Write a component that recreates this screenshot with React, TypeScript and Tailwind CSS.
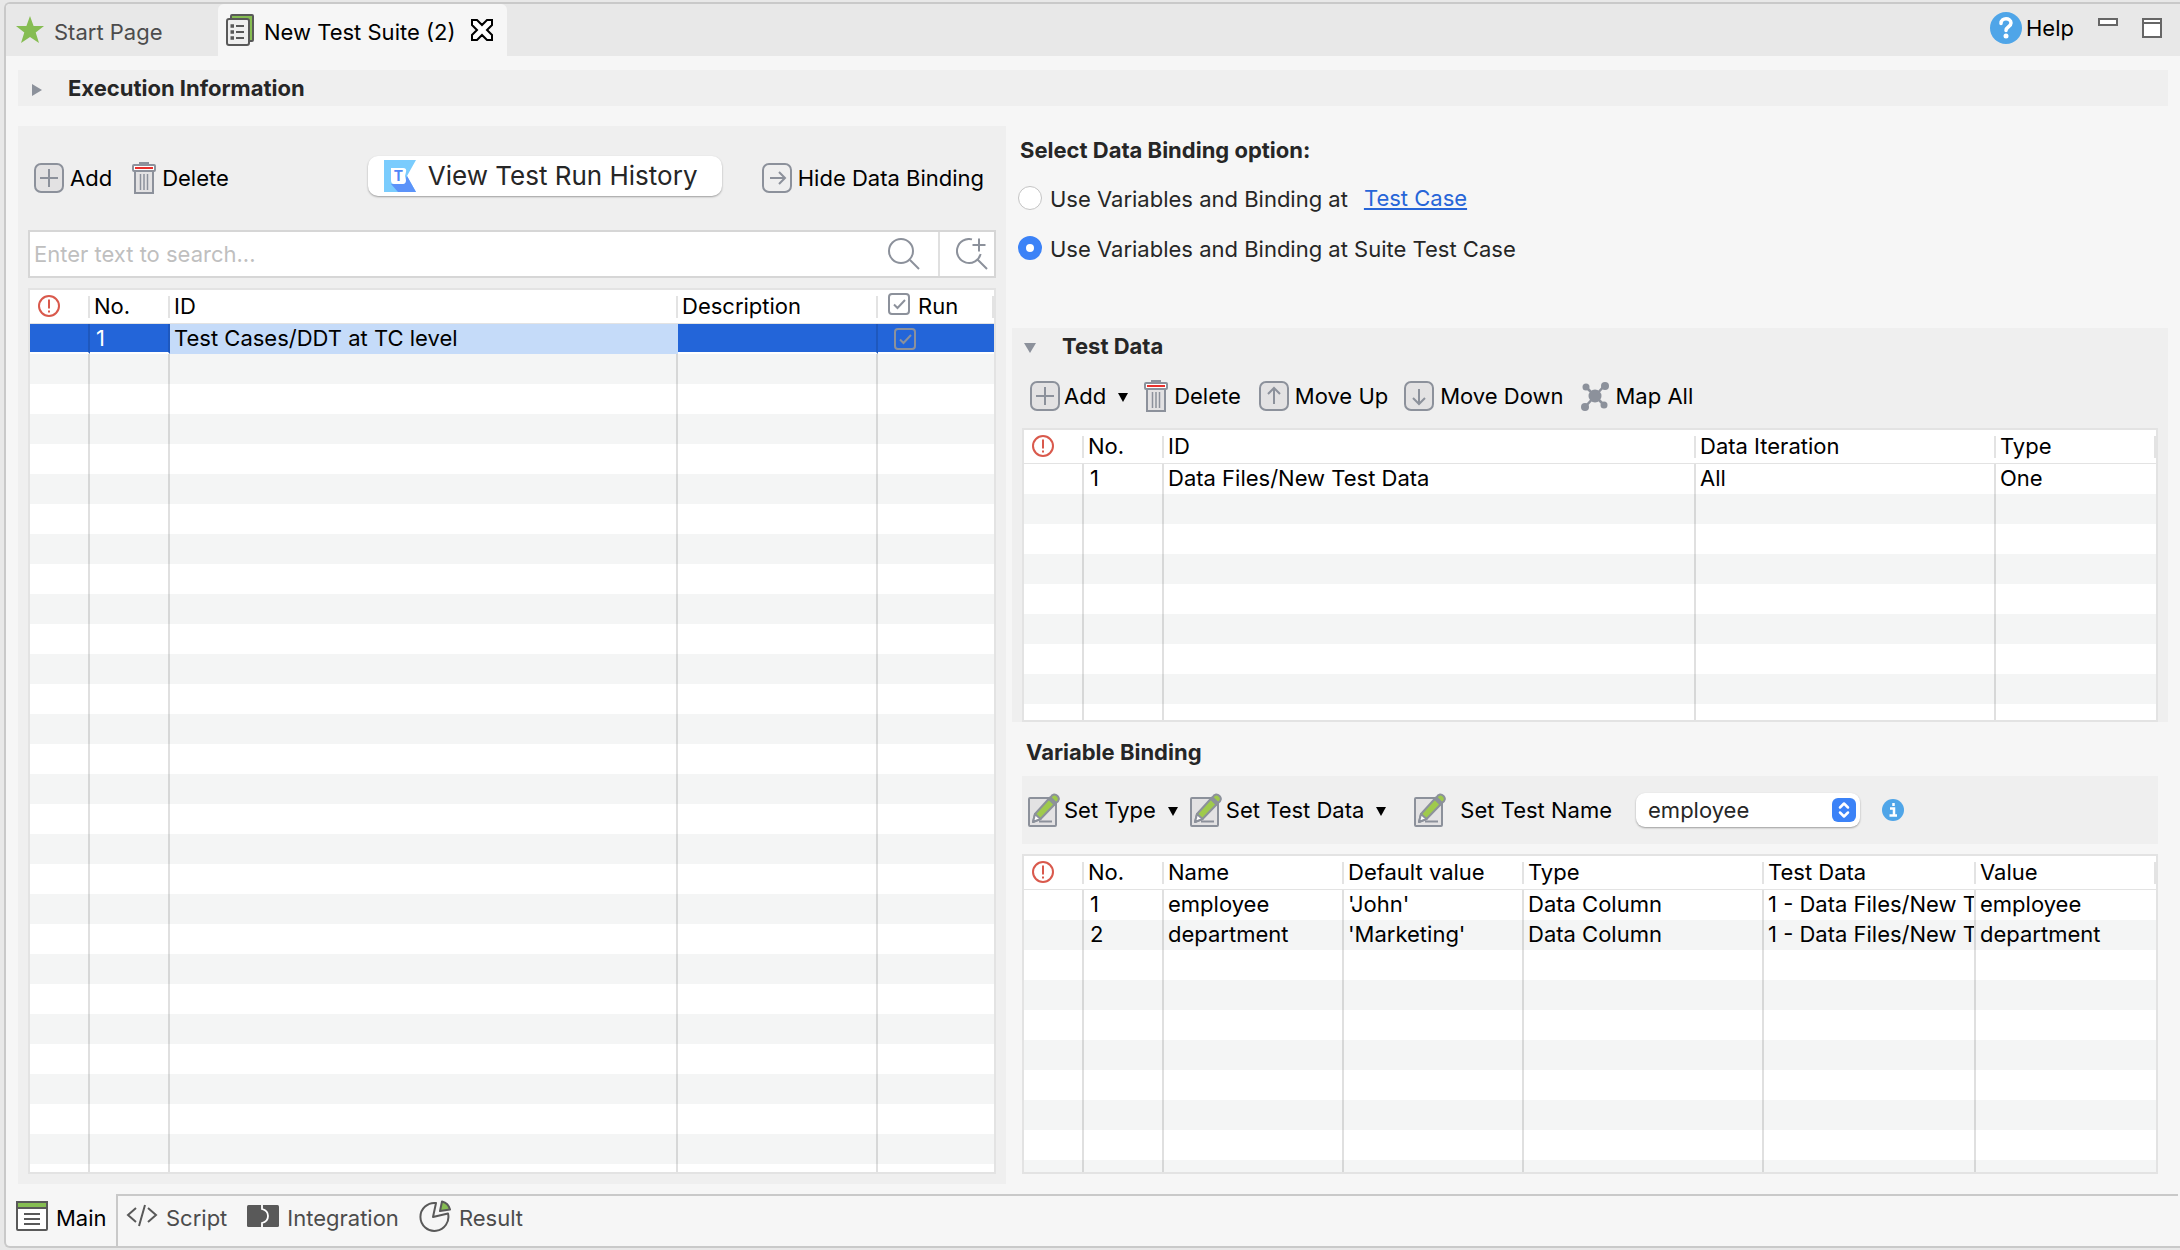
import React from "react";

type Cell = React.ReactNode;
type Column = { label: Cell; width?: string };

function WarningIcon() {
  return (
    <svg width="22" height="22" viewBox="0 0 22 22" fill="none" stroke="#d9594c" strokeWidth="2" role="img" aria-label="Status">
      <circle cx="11" cy="11" r="10" />
      <path d="M11 4.500v9M11 15.500v2" />
    </svg>
  );
}

function BoxIcon({ d, plain }: { d: string; plain?: boolean }) {
  return (
    <svg width="30" height="30" viewBox="0 0 30 30" fill="none" stroke="#8c919b" strokeWidth="2" className="shrink-0">
      <rect x="1" y="1" width="28" height="28" rx="6" fill={plain ? "none" : "#e3e2e3"} />
      <path d={d} />
    </svg>
  );
}

const PLUS = "M6 15h18M15 6v18";
const RIGHT = "M8 15h15M17 9l6 6-6 6";
const UP = "M15 23V7M9 13l6-6 6 6";
const DOWN = "M15 8v15M9 17l6 6 6-6";

function TrashIcon() {
  return (
    <svg width="24" height="32" viewBox="0 0 24 32" fill="none" stroke="#8c919b" strokeWidth="2" className="shrink-0">
      <path d="M3 9v22h18V9" fill="#e3e2e3" />
      <path d="M7 1.500h10" strokeWidth="3" />
      <rect x="1" y="3" width="22" height="6" rx="1" fill="#fff" />
      <path d="M3 6h18" stroke="#e8302c" />
      <path d="M8.500 12v16M12 12v16M15.500 12v16" strokeWidth="1.500" />
    </svg>
  );
}

function EditIcon() {
  return (
    <svg width="32" height="34" viewBox="0 0 32 34" fill="none" stroke="#8c919b" strokeWidth="2" strokeLinejoin="round" className="shrink-0">
      <rect x="1" y="5" width="27" height="28" rx="1" fill="#e3e2e3" />
      <path d="M11 28.500h13" />
      <path d="M5 29l2-8L22 4.500l6 5.500L12.500 26z" fill="#9fca4c" />
      <path d="M22.500 4.500c2-4 5-3.500 7-1.500s2 4.500-1.500 7z" fill="#9fca4c" />
      <path d="M5 29l2-8 5.500 5z" fill="#fff" />
      <path d="M21 6l6 6" />
    </svg>
  );
}

function MapIcon() {
  return (
    <svg width="30" height="30" viewBox="0 0 30 30" fill="#8c919b" stroke="#8c919b" strokeWidth="2.500" className="shrink-0">
      <path d="M6 6l18 18M25 4L5 26" />
      <g stroke="none">
        <circle cx="15" cy="15" r="6.500" />
        <circle cx="6" cy="6" r="3.500" />
        <circle cx="25" cy="5" r="4" />
        <circle cx="24" cy="24" r="3.500" />
        <circle cx="5" cy="26" r="4" />
      </g>
    </svg>
  );
}

function Caret() {
  return (
    <svg width="10" height="9" viewBox="0 0 10 9" className="shrink-0">
      <path d="M0 0h10L5 9z" fill="#000" />
    </svg>
  );
}

function ToolButton({ icon, label, caret, wide }: { icon: Cell; label: string; caret?: boolean; wide?: boolean }) {
  return (
    <button type="button" className={"flex items-center whitespace-nowrap " + (wide ? "gap-3.5" : caret ? "gap-1" : "gap-1.5")}>
      {icon}
      <span>{label}</span>
      {caret && <span className="pt-0.5 pl-2"><Caret /></span>}
    </button>
  );
}

function RunCheck({ label }: { label: string }) {
  return (
    <span className="relative block size-[22px] shrink-0">
      <input type="checkbox" defaultChecked aria-label={label} className="peer block size-[22px] appearance-none rounded-sm border-2 border-[#8c919b]" />
      <svg viewBox="0 0 22 22" className="pointer-events-none absolute inset-0 hidden peer-checked:block" fill="none" stroke="#8c919b" strokeWidth="2">
        <path d="M6 11.500l3.500 3.500L17 7" />
      </svg>
    </span>
  );
}

function StripedTable({ label, columns, rows, selected }: { label: string; columns: Column[]; rows: Cell[][]; selected?: boolean }) {
  const filler = Array.from({ length: 40 }, (_, i) => i + rows.length);
  return (
    <div className="min-h-0 flex-1 overflow-hidden border-2 border-[#e3e3e3] bg-white">
      <table aria-label={label} className="w-full table-fixed border-separate border-spacing-0 text-left">
        <colgroup>
          {columns.map((c, i) => (
            <col key={i} className={c.width} />
          ))}
        </colgroup>
        <thead>
          <tr>
            {columns.map((c, i) => (
              <th key={i} scope="col" className="h-[34px] border-b border-[#e3e3e3] p-0 font-normal">
                <div className="flex h-[22px] items-center border-r-2 border-[#e3e3e3] pb-0.5 pl-1 whitespace-nowrap">{c.label}</div>
              </th>
            ))}
          </tr>
        </thead>
        <tbody>
          {rows.map((r, i) => (
            <tr key={i} className={i % 2 ? "bg-[#f4f5f5]" : "bg-white"}>
              {r.map((cell, j) => (
                <td
                  key={j}
                  className={
                    "h-[30px] overflow-hidden p-0 whitespace-nowrap " +
                    (j < r.length - 1 ? "border-r-2 " : "") +
                    (j === 1 ? "pl-1.5 " : "pl-1 ") +
                    (selected
                      ? j === 2
                        ? "border-[#c5dbf9] bg-[#c5dbf9] pb-0.5"
                        : "border-r-black/12 border-b-2 border-b-white bg-[#2365d9] text-white"
                      : "border-black/12 pb-0.5")
                  }
                >
                  {cell}
                </td>
              ))}
            </tr>
          ))}
          {filler.map((n) => (
            <tr key={n} aria-hidden="true" className={n % 2 ? "bg-[#f4f5f5]" : "bg-white"}>
              {columns.map((_, j) => (
                <td key={j} className={"h-[30px] p-0 " + (j < columns.length - 1 ? "border-r-2 border-black/12" : "")} />
              ))}
            </tr>
          ))}
        </tbody>
      </table>
    </div>
  );
}

const warn = <span className="pl-1"><WarningIcon /></span>;

function EditorTabs() {
  return (
    <header className="flex h-13 shrink-0 items-stretch bg-[#e8e8e8]">
      <button type="button" className="flex w-[212px] items-center pl-2.5 text-[#4c4c4c]">
        <svg width="28" height="28" viewBox="0 0 28 28">
          <path d="M14 0l3.600 10H28l-8.300 6.600L23 27l-9-6-9 6 3.300-10.400L0 10h10.400z" fill="#86bd52" />
        </svg>
        <span className="pt-1 pl-2.5">Start Page</span>
      </button>
      <div className="flex items-center rounded-t-md bg-[#f6f6f6] pr-3.5 pl-2">
        <button type="button" className="flex items-center">
          <svg width="28" height="32" viewBox="0 0 28 32" fill="none" stroke="#595959" strokeWidth="2">
            <rect x="5" y="1" width="22" height="26" rx="1" fill="#86bd52" />
            <rect x="1" y="5" width="22" height="26" rx="2" fill="#efefef" />
            <path d="M10 12h8M10 18h8M10 24h8" />
            <path d="M4.500 12h3.500M4.500 18h3.500M4.500 24h3.500" strokeWidth="3.500" />
          </svg>
          <span className="pt-1 pl-2.5">New Test Suite (2)</span>
        </button>
        <button type="button" aria-label="Close tab" className="pl-4">
          <svg width="22" height="22" viewBox="0 0 22 22" fill="#fff" stroke="#000" strokeWidth="2">
            <path d="M1 1h5l5 5 5-5h5v5l-5 5 5 5v5h-5l-5-5-5 5H1v-5l5-5-5-5z" />
          </svg>
        </button>
      </div>
      <div className="mb-1 ml-auto flex items-center pr-4.5">
        <button type="button" className="flex items-center gap-1">
          <svg width="32" height="32" viewBox="0 0 32 32" fill="none">
            <circle cx="16" cy="16" r="16" fill="#4fa5e8" />
            <path d="M11 11.500c0-6.500 10-6 10-.5 0 4-5 3.500-5 7.500" stroke="#fff" strokeWidth="3.500" strokeLinecap="round" />
            <circle cx="16" cy="24" r="2.500" fill="#fff" />
          </svg>
          <span>Help</span>
        </button>
        <button type="button" aria-label="Minimize" className="mb-3 pl-6">
          <svg width="20" height="8" viewBox="0 0 20 8" fill="#fff" stroke="#666" strokeWidth="2">
            <rect x="1" y="1" width="18" height="6" />
          </svg>
        </button>
        <button type="button" aria-label="Maximize" className="pl-6">
          <svg width="20" height="20" viewBox="0 0 20 20" fill="#fff" stroke="#666" strokeWidth="2">
            <path d="M1 1h18v18H1zM1 5h18" />
          </svg>
        </button>
      </div>
    </header>
  );
}

function TestCasePanel() {
  return (
    <section className="flex min-h-0 flex-col bg-[#efefef] px-2.5 pb-2.5">
      <div className="flex h-[104px] shrink-0 items-center pr-3 pl-1.5">
        <ToolButton icon={<BoxIcon d={PLUS} />} label="Add" />
        <div className="pl-5">
          <ToolButton icon={<TrashIcon />} label="Delete" />
        </div>
        <button type="button" className="mb-1 ml-auto flex h-10 w-[354px] items-center gap-3 rounded-[10px] bg-white pl-4 text-[26px] whitespace-nowrap text-[#262626] shadow-[0_1px_2px_rgba(0,0,0,0.35)]">
          <svg width="32" height="32" viewBox="0 0 32 32">
            <path d="M0 0h32L23 16l9 16H0z" fill="#7accfd" />
            <path d="M7 24h12l4-8 9 16H14z" fill="#5c93f9" />
            <path d="M7 8h12q4 0 3 4l-1 4 1 4q0 4-3 4h-9q-3 0-3-4z" fill="#fff" />
            <text x="14.500" y="21" textAnchor="middle" fontSize="14" fontWeight="700" fill="#4f86f7">T</text>
          </svg>
          View Test Run History
        </button>
        <div className="pl-10">
          <ToolButton icon={<BoxIcon d={RIGHT} plain />} label="Hide Data Binding" />
        </div>
      </div>
      <div className="mb-2.5 flex h-12 shrink-0 items-stretch border-2 border-[#d6d6d6] bg-white">
        <input type="search" aria-label="Search test cases" placeholder="Enter text to search..." className="min-w-0 flex-1 bg-transparent pl-1 outline-none placeholder:text-[#bfbfbf]" />
        <button type="button" aria-label="Search" className="pr-4.5 pl-4">
          <svg width="32" height="32" viewBox="0 0 32 32" fill="none" stroke="#8c919b" strokeWidth="2">
            <circle cx="13" cy="13" r="12" />
            <path d="M22 22l9 9" />
          </svg>
        </button>
        <button type="button" aria-label="Advanced search" className="border-l-2 border-[#e0e0e0] pr-1.5 pl-4">
          <svg width="32" height="32" viewBox="0 0 32 32" fill="none" stroke="#8c919b" strokeWidth="2">
            <path d="M16 1.400A12 12 0 1 0 24.600 16M22 22l9 9M23 .5v13M16.500 7h13" />
          </svg>
        </button>
      </div>
      <StripedTable
        label="Test cases"
        selected
        columns={[
          { label: warn, width: "w-[60px]" },
          { label: "No.", width: "w-[80px]" },
          { label: "ID" },
          { label: "Description", width: "w-[200px]" },
          { label: <span className="flex items-center gap-2 pl-1.5"><span className="pb-1"><RunCheck label="Run all" /></span>Run</span>, width: "w-[116px]" },
        ]}
        rows={[["", "1", <span className="text-black">Test Cases/DDT at TC level</span>, "", <span className="block pt-0.5 pl-3"><RunCheck label="Run Test Cases/DDT at TC level" /></span>]]}
      />
    </section>
  );
}

function RadioRow({ id, label, checked, children }: { id: string; label: string; checked?: boolean; children?: Cell }) {
  return (
    <div className="flex h-[50px] items-center pl-1.5">
      <input
        type="radio"
        name="binding"
        id={id}
        defaultChecked={checked}
        className="size-6 appearance-none rounded-full border border-[#c4c4c4] bg-white checked:border-8 checked:border-[#3b82f7]"
      />
      <label htmlFor={id} className="pt-0.5 pl-2">{label}</label>
      {children}
    </div>
  );
}

function BindingPanel() {
  return (
    <div className="grid min-h-0 grid-rows-[auto_minmax(0,394fr)_minmax(0,452fr)] pb-2.5">
      <fieldset className="mb-[55px] text-[#262626]">
        <legend className="flex h-[47px] items-center pl-2 font-bold">Select Data Binding option:</legend>
        <RadioRow id="bind-case" label="Use Variables and Binding at">
          <a href="#test-case" className="pl-4 text-[#2765d8] underline underline-offset-2">Test Case</a>
        </RadioRow>
        <RadioRow id="bind-suite" label="Use Variables and Binding at Suite Test Case" checked />
      </fieldset>

      <section className="flex min-h-0 flex-col bg-[#efefef] px-2.5">
        <button type="button" className="flex h-9 shrink-0 items-center pl-0.5 font-bold text-[#262626]">
          <svg width="12" height="10" viewBox="0 0 12 10" className="mt-1"><path d="M0 0h12L6 10z" fill="#8c919b" /></svg>
          <span className="pl-6.5">Test Data</span>
        </button>
        <div className="flex h-16 shrink-0 items-center gap-4 pl-2">
          <ToolButton icon={<BoxIcon d={PLUS} />} label="Add" caret />
          <div className="pr-0.5"><ToolButton icon={<TrashIcon />} label="Delete" /></div>
          <ToolButton icon={<BoxIcon d={UP} />} label="Move Up" />
          <ToolButton icon={<BoxIcon d={DOWN} />} label="Move Down" />
          <ToolButton icon={<MapIcon />} label="Map All" />
        </div>
        <StripedTable
          label="Test data"
          columns={[
            { label: warn, width: "w-[60px]" },
            { label: "No.", width: "w-[80px]" },
            { label: "ID" },
            { label: "Data Iteration", width: "w-[300px]" },
            { label: "Type", width: "w-[160px]" },
          ]}
          rows={[["", "1", "Data Files/New Test Data", "All", "One"]]}
        />
      </section>

      <section className="flex min-h-0 flex-col px-2.5">
        <h2 className="flex h-[54px] shrink-0 items-center pt-1.5 pl-1 font-bold text-[#262626]">Variable Binding</h2>
        <div className="mb-2.5 flex h-[68px] shrink-0 items-center bg-[#efefef] pl-1.5">
          <ToolButton icon={<EditIcon />} label="Set Type" caret />
          <div className="pl-3"><ToolButton icon={<EditIcon />} label="Set Test Data" caret /></div>
          <div className="pl-7"><ToolButton icon={<EditIcon />} label="Set Test Name" wide /></div>
          <div className="relative ml-6">
            <select aria-label="Test name variable" className="block h-[34px] w-[224px] appearance-none rounded-[9px] bg-white pl-3 text-[#262626] shadow-[0_1px_2px_rgba(0,0,0,0.35)]">
              <option>employee</option>
              <option>department</option>
            </select>
            <svg width="24" height="24" viewBox="0 0 24 24" className="pointer-events-none absolute top-[5px] right-1" fill="none" stroke="#fff" strokeWidth="2.500" strokeLinecap="round" strokeLinejoin="round">
              <rect width="24" height="24" rx="6" fill="#3b82f7" stroke="none" />
              <path d="M8 9.500L12 5.500l4 4M8 14.500l4 4 4-4" />
            </svg>
          </div>
          <svg width="22" height="22" viewBox="0 0 22 22" className="ml-5.5" role="img" aria-label="Information">
            <circle cx="11" cy="11" r="11" fill="#4fa5e8" />
            <path d="M11.500 4v3M8 9.500h4V16M7.500 16.500h7.500" stroke="#fff" strokeWidth="2.500" fill="none" />
          </svg>
        </div>
        <StripedTable
          label="Variable binding"
          columns={[
            { label: warn, width: "w-[60px]" },
            { label: "No.", width: "w-[80px]" },
            { label: "Name", width: "w-[180px]" },
            { label: "Default value", width: "w-[180px]" },
            { label: "Type" },
            { label: "Test Data", width: "w-[212px]" },
            { label: "Value", width: "w-[180px]" },
          ]}
          rows={[
            ["", "1", "employee", "'John'", "Data Column", "1 - Data Files/New Test Data", "employee"],
            ["", "2", "department", "'Marketing'", "Data Column", "1 - Data Files/New Test Data", "department"],
          ]}
        />
      </section>
    </div>
  );
}

function ViewTabs() {
  return (
    <nav className="flex h-13 shrink-0 items-stretch pr-0.5 text-[#4c4c4c]">
      <button type="button" className="flex w-[110px] items-center gap-2 pt-0.5 pb-1.5 pl-2.5 text-black">
        <svg width="32" height="30" viewBox="0 0 32 30" fill="none" stroke="#595959" strokeWidth="2" className="mb-1">
          <rect x="1" y="1" width="30" height="28" rx="1" fill="#fff" />
          <rect x="1" y="1" width="30" height="6" fill="#86bd52" />
          <path d="M8 13h16M8 18h16M8 23h16" />
        </svg>
        Main
      </button>
      <div className="flex flex-1 items-center gap-5 border-t-2 border-l-2 border-[#c9c9c9] pb-1.5 pl-2">
        <button type="button" className="flex items-center gap-2">
          <svg width="32" height="24" viewBox="0 0 32 24" fill="none" stroke="#595959" strokeWidth="2" className="mb-1">
            <path d="M10 4l-8 7 8 7M22 4l8 7-8 7M19 1l-6 21" />
          </svg>
          Script
        </button>
        <button type="button" className="flex items-center gap-2">
          <svg width="32" height="22" viewBox="0 0 32 22" fill="none" className="mb-1">
            <rect width="32" height="22" rx="1.500" fill="#595959" />
            <path d="M15 0v4c8 2 8 12 0 14v4" stroke="#fff" strokeWidth="1.800" />
          </svg>
          Integration
        </button>
        <button type="button" className="flex items-center gap-2">
          <svg width="32" height="32" viewBox="0 0 32 32" fill="none" stroke="#595959" strokeWidth="2" strokeLinejoin="round" className="mb-1">
            <path d="M17 3A14 14 0 1 0 29 13.500L14 17z" />
            <path d="M23 1.500c4 1 7 4 8 8L21 11z" fill="#86bd52" />
          </svg>
          Result
        </button>
      </div>
    </nav>
  );
}

export default function App() {
  return (
    <div className="flex h-screen flex-col bg-[#e8e8e8] pt-0.5 pb-0.5 pl-1 font-['Inter',sans-serif] text-[22px] leading-[28px] text-black">
      <div className="flex min-h-0 flex-1 flex-col overflow-hidden rounded-l-md border-2 border-r-0 border-[#c9c9c9] bg-[#f6f6f6]">
        <EditorTabs />
        <button type="button" className="mx-3 mt-3.5 flex h-9 shrink-0 items-center bg-[#efefef] pl-3.5 font-bold text-[#262626]">
          <svg width="10" height="12" viewBox="0 0 10 12" className="mt-1"><path d="M0 0v12l10-6z" fill="#8c919b" /></svg>
          <span className="pl-6.5">Execution Information</span>
        </button>
        <main className="mx-3 mt-5 mb-2.5 grid min-h-0 flex-1 grid-cols-[minmax(0,988fr)_minmax(0,1156fr)] grid-rows-[minmax(0,1fr)] gap-1.5">
          <TestCasePanel />
          <BindingPanel />
        </main>
        <ViewTabs />
      </div>
    </div>
  );
}
